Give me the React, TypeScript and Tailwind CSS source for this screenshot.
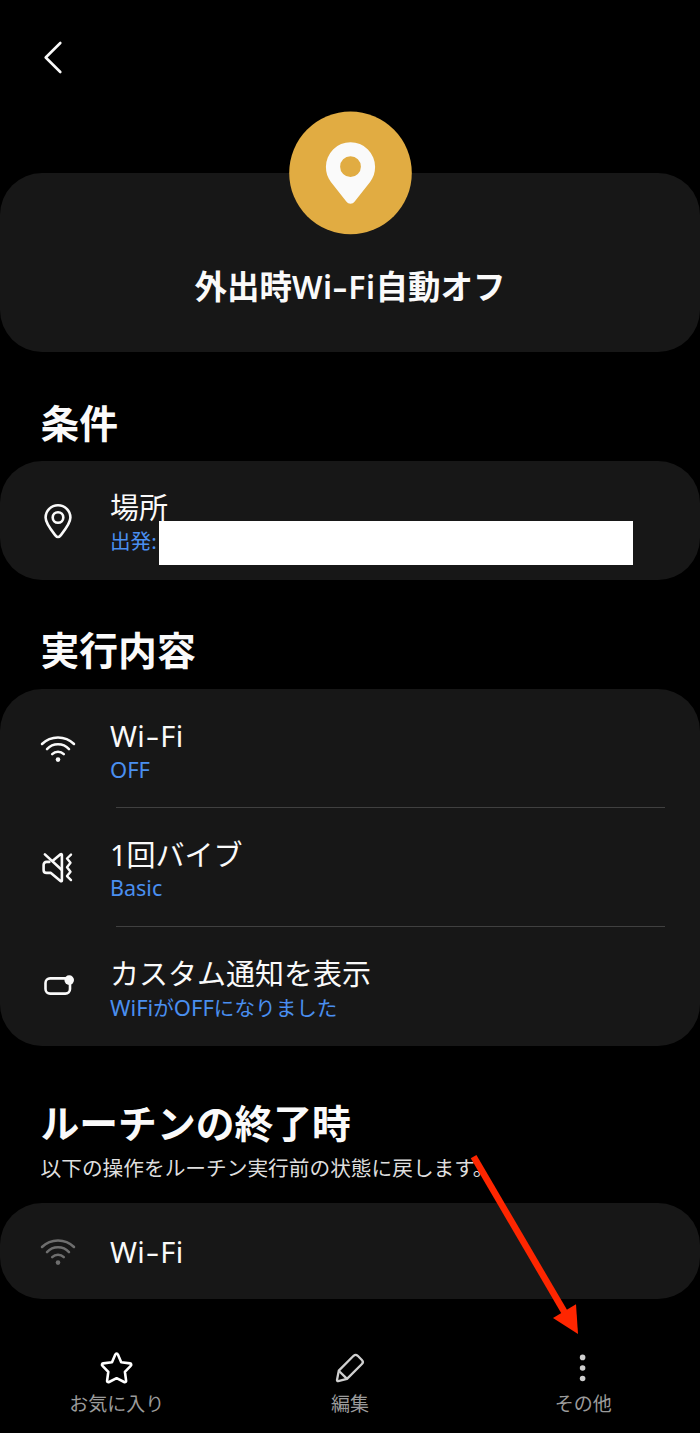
import React from 'react';

const fontStack = "font-['Noto_Sans','Noto_Sans_CJK_JP',sans-serif]";

function PinIcon() {
  return (
    <svg width="40" height="40" viewBox="0 0 40 40" fill="none" stroke="currentColor" strokeWidth="2.6">
      <path d="M20 37c-1 0-1.7-.5-2.4-1.4C12.8 29.6 7.6 23.6 7.6 17.6a12.4 12.4 0 0 1 24.8 0c0 6-5.2 12-10 18-.7.9-1.4 1.4-2.4 1.4z" />
      <circle cx="20" cy="17.5" r="5.3" />
    </svg>
  );
}

function WifiIcon() {
  return (
    <svg width="40" height="40" viewBox="0 0 40 40" fill="none" stroke="currentColor" strokeWidth="2.5" strokeLinecap="round">
      <path d="M4 16a22.8 22.8 0 0 1 32 0" />
      <path d="M9 21.1a15 15 0 0 1 22 0" />
      <path d="M14.2 26.2a8.2 8.2 0 0 1 11.6 0" />
      <circle cx="20" cy="31.6" r="2.3" fill="currentColor" stroke="none" />
    </svg>
  );
}

function MuteVibrateIcon() {
  return (
    <svg width="40" height="40" viewBox="0 0 40 40" fill="none" stroke="currentColor" strokeWidth="2.6" strokeLinecap="round" strokeLinejoin="round">
      <path d="M11.3 14.9H8.6c-1.8 0-3 1.2-3 3v5c0 1.8 1.2 3 3 3h4.3l9.6 8.1c.7.5 1.4.2 1.4-.6V7.9c0-.8-.7-1.1-1.4-.6l-7.7 6.5" />
      <path d="M6.9 7.4 23.6 22.8" />
      <path d="m33 7.6-4 3.9 3.5 4.2-3.5 4.6 3.5 4.4-3.5 4.4 4 4" strokeWidth="2.4" />
    </svg>
  );
}

function NotificationIcon() {
  return (
    <svg width="40" height="40" viewBox="0 0 40 40" fill="none" stroke="currentColor" strokeWidth="2.6">
      <rect x="7.5" y="12.4" width="24.5" height="15.2" rx="4.6" />
      <circle cx="31.2" cy="14.1" r="4.8" fill="currentColor" stroke="none" />
    </svg>
  );
}

function StarIcon() {
  return (
    <svg width="40" height="40" viewBox="0 0 40 40" fill="none" stroke="currentColor" strokeWidth="2.6" strokeLinejoin="round">
      <path d="M18.3 6.6c.5-1.3 2.1-1.3 2.6 0l3.3 7.7 8.8 1.1c1.3.2 1.7 1.5.7 2.4l-5.8 6 1.2 8.8c.2 1.3-.8 2-2 1.4l-7.5-3.8-7.5 3.8c-1.2.6-2.2-.1-2-1.4l1.2-8.8-5.8-6c-1-.9-.6-2.2.7-2.4l8.8-1.1z" />
    </svg>
  );
}

function PencilIcon() {
  return (
    <svg width="40" height="40" viewBox="0 0 40 40" fill="none" stroke="currentColor" strokeWidth="2.3" strokeLinejoin="round">
      <path d="M8.8 22.6 23.6 7.8c1.3-1.2 2.8-1.2 4.1 0l4.2 4.2c1.3 1.3 1.3 2.7 0 4L17 30.9l-8.8 2.2c-.8.2-1.3-.3-1.2-1.1z" />
      <path d="m9 23 8 7.9" />
    </svg>
  );
}

function MoreIcon() {
  return (
    <svg width="40" height="40" viewBox="0 0 40 40" fill="currentColor">
      <circle cx="19.6" cy="9.4" r="2.8" />
      <circle cx="19.6" cy="20" r="2.8" />
      <circle cx="19.6" cy="30.5" r="2.8" />
    </svg>
  );
}

// the hyphen is drawn wider than the font's own
function WifiLabel() {
  return (
    <span className="tracking-[0.4px]">
      Wi<span className="inline-block scale-x-145 mx-[2.6px]">-</span>Fi
    </span>
  );
}

type RowProps = {
  icon: React.ReactNode;
  title: React.ReactNode;
  sub: React.ReactNode;
};

function Row({ icon, title, sub }: RowProps) {
  return (
    <div className="h-[118px] flex items-start pl-[38px]">
      <div className="w-[72px] pt-[39px] shrink-0">{icon}</div>
      <div className="pt-[27px] whitespace-nowrap">
        <p className="h-[39px] text-[29px] leading-[39px]">{title}</p>
        <p className="h-[28px] text-[20.6px] leading-[28px] text-[#4a8ff0]">{sub}</p>
      </div>
    </div>
  );
}

function Divider() {
  return <div className="h-px ml-[116px] mr-[35px] bg-[#404040]" />;
}

function NavItem({ icon, label }: { icon: React.ReactNode; label: string }) {
  return (
    <button className="flex-1 flex flex-col items-center text-[#cfcfcf]">
      {icon}
      <span className="pt-px text-[19px] leading-[30px] text-[#9b9b9b]">{label}</span>
    </button>
  );
}

export default function App() {
  return (
    <div lang="ja" className={`relative w-[700px] h-[1433px] overflow-hidden bg-black text-[#fafafa] ${fontStack}`}>
      {/* Header */}
      <header className="h-[173px] pt-[37px] pl-[32px]">
        <button className="block">
          <svg width="40" height="40" viewBox="0 0 40 40" fill="none" stroke="currentColor" strokeWidth="2.6" strokeLinecap="round" strokeLinejoin="round">
            <path d="M28.3 6 13.7 20.5 28.3 35" />
          </svg>
        </button>
      </header>

      {/* Routine title */}
      <section className="relative h-[179px] rounded-[42px] bg-[#171717] pt-[90px] text-center">
        <div className="absolute left-[289px] top-[-62px]">
          <svg width="123" height="124" viewBox="0 0 123 124">
            <circle cx="61.5" cy="61.9" r="61.3" fill="#e1ac42" />
            <path
              fill="#fafafa"
              fillRule="evenodd"
              d="M61.5 31.2A24.6 24.6 0 0 0 36.9 55.8c0 6.1 1.7 10.6 5 15.2l15.4 19.6c2.4 3 6 3 8.4 0L81.1 71c3.3-4.6 5-9.1 5-15.2A24.6 24.6 0 0 0 61.5 31.2zm0 14.1a10.4 10.4 0 1 1 0 20.8 10.4 10.4 0 0 1 0-20.8z"
            />
          </svg>
        </div>
        <h1 className="text-[32.5px] leading-[48px] font-bold whitespace-nowrap">
          外出時<span className="font-semibold text-[32px] tracking-[-0.4px]"><WifiLabel /></span>自動オフ
        </h1>
      </section>

      {/* Conditions */}
      <h2 className="h-[109px] pt-[46px] pl-[40.5px] text-[38.8px] leading-[50px] font-bold">条件</h2>
      <section className="relative h-[119px] rounded-[42px] bg-[#171717]">
        <Row icon={<PinIcon />} title="場所" sub="出発:" />
        <div className="absolute left-[159px] top-[60px] w-[474px] h-[44px] bg-white" />
      </section>

      {/* Actions */}
      <h2 className="h-[109px] pt-[45px] pl-[40.5px] text-[38.8px] leading-[50px] font-bold">実行内容</h2>
      <section className="h-[357px] rounded-[42px] bg-[#171717]">
        <Row icon={<WifiIcon />} title={<WifiLabel />} sub={<span className="text-[22px]">OFF</span>} />
        <Divider />
        <Row icon={<MuteVibrateIcon />} title="1回バイブ" sub={<span className="text-[21.5px]">Basic</span>} />
        <Divider />
        <Row
          icon={<NotificationIcon />}
          title="カスタム通知を表示"
          sub={
            <>
              <span className="text-[22px]">WiFi</span>が<span className="text-[22px]">OFF</span>になりました
            </>
          }
        />
      </section>

      {/* When the routine ends */}
      <div className="h-[157px] pt-[52px] pl-[40.5px]">
        <h2 className="text-[38.8px] leading-[50px] font-bold">ルーチンの終了時</h2>
        <p className="pt-[5px] text-[20.7px] leading-[30px] text-[#dedede]">以下の操作をルーチン実行前の状態に戻します。</p>
      </div>
      <section className="h-[96px] rounded-[42px] bg-[#171717] flex items-start pl-[38px]">
        <div className="w-[72px] pt-[28px] text-[#6e6e6e]">
          <WifiIcon />
        </div>
        <p className="pt-[29px] text-[29px] leading-[40px]">
          <WifiLabel />
        </p>
      </section>

      {/* Bottom bar */}
      <nav className="flex pt-[49px]">
        <NavItem icon={<span className="text-white"><StarIcon /></span>} label="お気に入り" />
        <NavItem icon={<PencilIcon />} label="編集" />
        <NavItem icon={<MoreIcon />} label="その他" />
      </nav>

      {/* Arrow pointing at the more menu */}
      <svg className="absolute left-[460px] top-[1150px] pointer-events-none" width="130" height="190" viewBox="0 0 130 190" fill="#ff2600">
        <path d="M13.6 6.7 105 163" stroke="#ff2600" strokeWidth="6.6" />
        <path d="M118 184 93 168 116 154.3z" />
      </svg>
    </div>
  );
}
